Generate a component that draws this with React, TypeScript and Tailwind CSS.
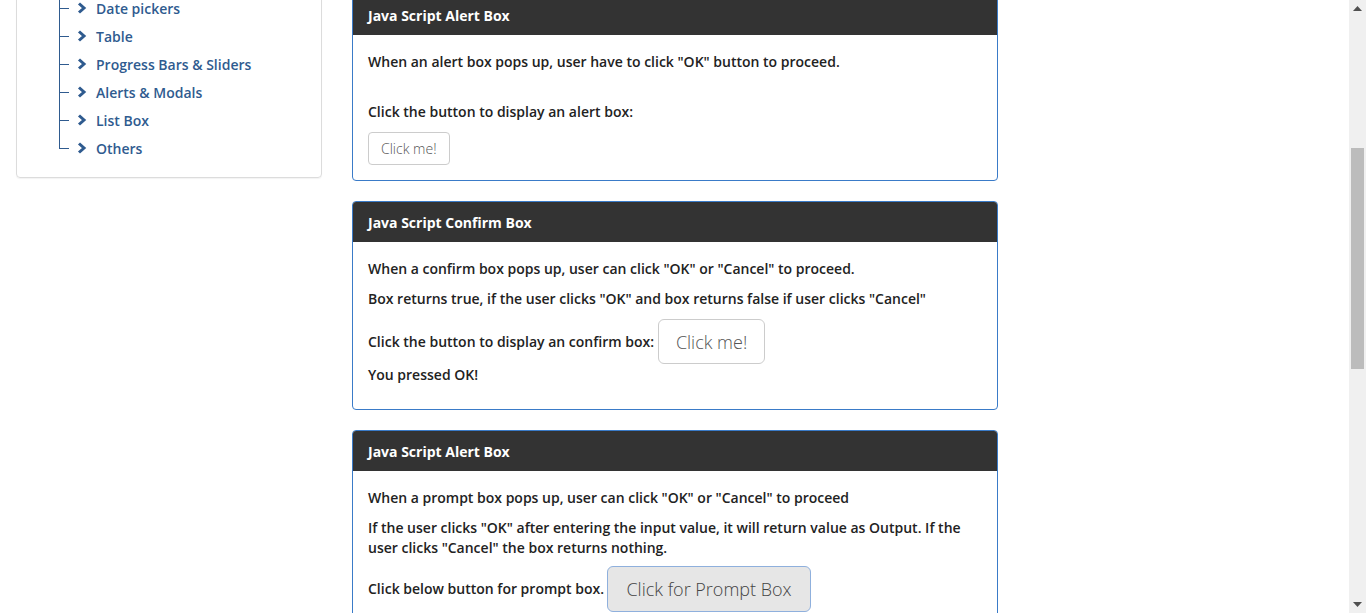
import React from 'react';

const menuItems = ['Date pickers', 'Table', 'Progress Bars & Sliders', 'Alerts & Modals', 'List Box', 'Others'];

function Chevron() {
  return (
    <svg width="10" height="12" viewBox="0 0 10 12" className="shrink-0">
      <path d="M2 1.5 L7 6 L2 10.5" fill="none" stroke="#2f5b8f" strokeWidth="3" strokeLinejoin="miter" />
    </svg>
  );
}

function Sidebar() {
  return (
    <div className="ml-4 w-[306px] -mt-[20px] shrink-0 border border-[#dcdcdc] rounded-[4px] pt-[13px] pb-[15px] shadow-[0_1px_1px_rgba(0,0,0,0.05)]">
      <ul className="pl-[42px]">
        {menuItems.map((item, idx) => (
          <li key={item} className="relative h-[28px] flex items-center text-[14px] font-semibold text-[#2f5b8f]">
            <span className={`absolute left-0 top-0 w-px bg-[#2f5b8f] ${idx === menuItems.length - 1 ? 'h-[14px]' : 'h-full'}`} />
            <span className="absolute left-0 top-[14px] w-[10px] h-px bg-[#2f5b8f]" />
            <span className="ml-[18px] mr-[9px] flex items-center"><Chevron /></span>
            <span>{item}</span>
          </li>
        ))}
      </ul>
    </div>
  );
}

function Card({ title, children }: { title: string; children: React.ReactNode }) {
  return (
    <div className="border border-[#3a7bc8] rounded-[4px] overflow-hidden mb-[20px]">
      <div className="h-[40px] bg-[#333333] px-[15px] flex items-center text-white text-[14px] font-bold">{title}</div>
      <div className="px-[15px] pt-[17px] pb-[15px] text-[14px] leading-[20px] text-[#222] font-semibold">{children}</div>
    </div>
  );
}

export default function App() {
  return (
    <div className="flex h-[613px] w-[1366px] overflow-hidden bg-white font-['Open_Sans','Lato',sans-serif]">
      <div className="flex-1 flex items-start">
        <Sidebar />
        <div className="ml-[30px] w-[646px] -mt-[6px]">
          <Card title="Java Script Alert Box">
            <p className="mb-[10px]">When an alert box pops up, user have to click "OK" button to proceed.</p>
            <div className="h-[20px]" />
            <p className="mb-[10px]">Click the button to display an alert box:</p>
            <button className="h-[33px] px-[12px] border border-[#ccc] rounded-[4px] bg-white text-[14px] font-light text-[#555]">Click me!</button>
          </Card>
          <Card title="Java Script Confirm Box">
            <p className="mb-[10px]">When a confirm box pops up, user can click "OK" or "Cancel" to proceed.</p>
            <p className="mb-[10px]">Box returns true, if the user clicks "OK" and box returns false if user clicks "Cancel"</p>
            <div className="flex items-center gap-[4px]">
              <span>Click the button to display an confirm box:</span>
              <button className="h-[45px] w-[107px] border border-[#ccc] rounded-[6px] bg-white text-[18px] font-light text-[#555]">Click me!</button>
            </div>
            <p className="mt-[1px] mb-[9px]">You pressed OK!</p>
          </Card>
          <Card title="Java Script Alert Box">
            <p className="mb-[10px]">When a prompt box pops up, user can click "OK" or "Cancel" to proceed</p>
            <p className="mb-[8px]">If the user clicks "OK" after entering the input value, it will return value as Output. If the user clicks "Cancel" the box returns nothing.</p>
            <div className="flex items-center gap-[3px]">
              <span>Click below button for prompt box.</span>
              <button className="h-[46px] w-[204px] border border-[#8fb0dd] rounded-[6px] bg-[#e6e6e6] text-[18px] font-light text-[#444]">Click for Prompt Box</button>
            </div>
          </Card>
        </div>
      </div>
      <div className="w-[17px] h-full bg-[#f0f0f0] flex flex-col items-center">
        <div className="h-[17px] flex items-center justify-center">
          <svg width="9" height="5" viewBox="0 0 9 5"><path d="M0 5 L4.5 0 L9 5 Z" fill="#505050" /></svg>
        </div>
        <div className="mt-[131px] w-[13px] h-[221px] bg-[#bcbcbc]" />
        <div className="flex-1" />
        <div className="h-[17px] flex items-center justify-center">
          <svg width="9" height="5" viewBox="0 0 9 5"><path d="M0 0 L4.5 5 L9 0 Z" fill="#505050" /></svg>
        </div>
      </div>
    </div>
  );
}
